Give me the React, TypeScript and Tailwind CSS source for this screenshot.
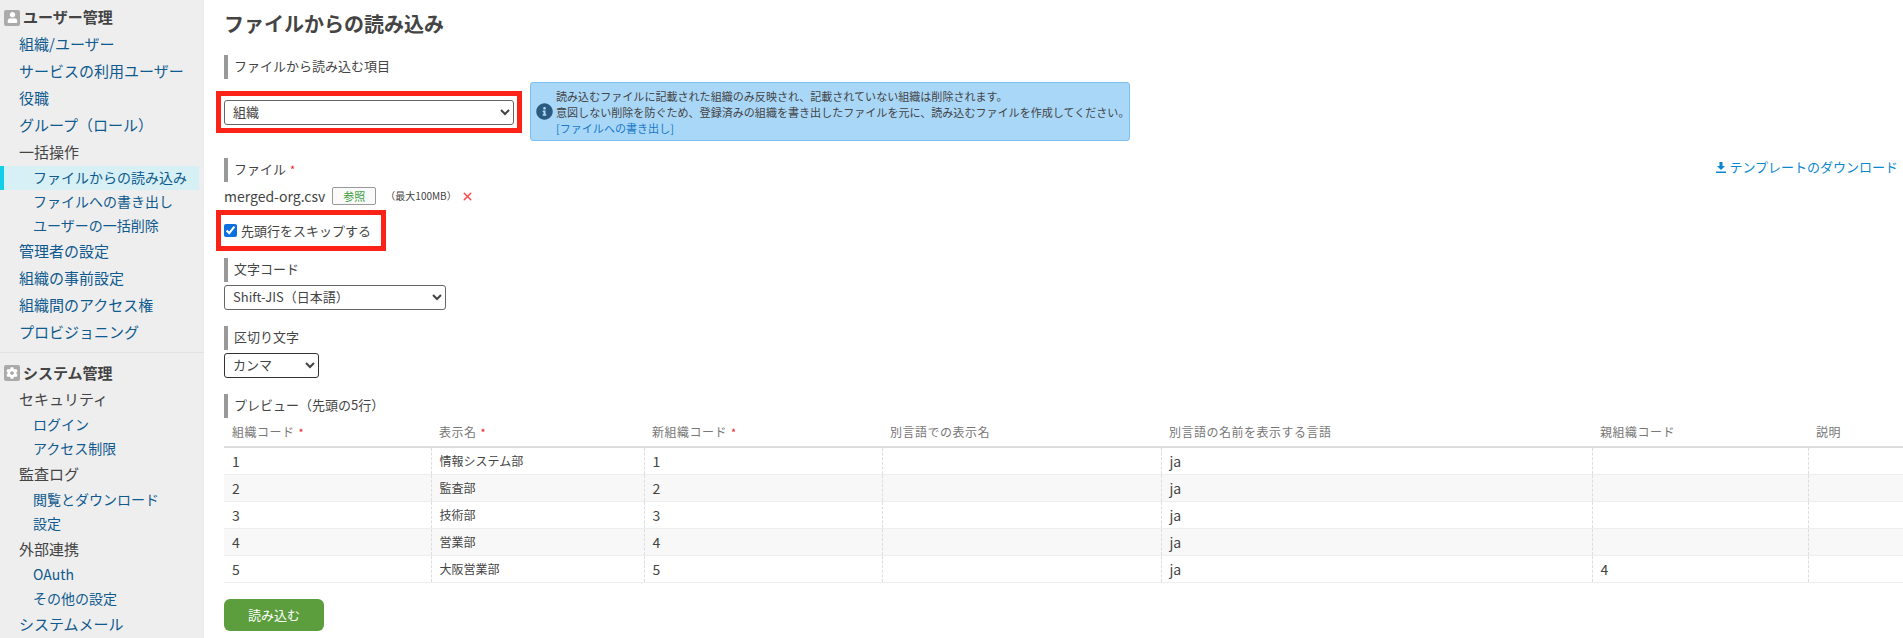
import React from 'react';
import { FaCog, FaInfoCircle, FaUser } from 'react-icons/fa';
import { X } from 'lucide-react';

const FONT = '[font-family:"Noto_Sans_CJK_JP","Noto_Sans",sans-serif]';

type NavItem = { label: string; level: 'top' | 'sub'; link?: boolean; active?: boolean };

const USER_NAV: NavItem[] = [
  { label: '組織/ユーザー', level: 'top', link: true },
  { label: 'サービスの利用ユーザー', level: 'top', link: true },
  { label: '役職', level: 'top', link: true },
  { label: 'グループ（ロール）', level: 'top', link: true },
  { label: '一括操作', level: 'top' },
  { label: 'ファイルからの読み込み', level: 'sub', link: true, active: true },
  { label: 'ファイルへの書き出し', level: 'sub', link: true },
  { label: 'ユーザーの一括削除', level: 'sub', link: true },
  { label: '管理者の設定', level: 'top', link: true },
  { label: '組織の事前設定', level: 'top', link: true },
  { label: '組織間のアクセス権', level: 'top', link: true },
  { label: 'プロビジョニング', level: 'top', link: true },
];

const SYSTEM_NAV: NavItem[] = [
  { label: 'セキュリティ', level: 'top' },
  { label: 'ログイン', level: 'sub', link: true },
  { label: 'アクセス制限', level: 'sub', link: true },
  { label: '監査ログ', level: 'top' },
  { label: '閲覧とダウンロード', level: 'sub', link: true },
  { label: '設定', level: 'sub', link: true },
  { label: '外部連携', level: 'top' },
  { label: 'OAuth', level: 'sub', link: true },
  { label: 'その他の設定', level: 'sub', link: true },
  { label: 'システムメール', level: 'top', link: true },
];

const COLUMNS = [
  { label: '組織コード', width: 'w-[207px]', required: true },
  { label: '表示名', width: 'w-[213px]', required: true },
  { label: '新組織コード', width: 'w-[238px]', required: true },
  { label: '別言語での表示名', width: 'w-[279px]' },
  { label: '別言語の名前を表示する言語', width: 'w-[431px]' },
  { label: '親組織コード', width: 'w-[216px]' },
  { label: '説明', width: 'w-[95px]' },
];

const ROWS = [
  ['1', '情報システム部', '1', '', 'ja', '', ''],
  ['2', '監査部', '2', '', 'ja', '', ''],
  ['3', '技術部', '3', '', 'ja', '', ''],
  ['4', '営業部', '4', '', 'ja', '', ''],
  ['5', '大阪営業部', '5', '', 'ja', '4', ''],
];

const NavRow = ({ item, raised }: { item: NavItem; raised?: boolean }) => {
  const color = item.link ? 'text-[#0f5a8e]' : 'text-[#444]';
  if (item.level === 'top') {
    return (
      <div className={`h-[27px] pl-[19px] text-[15px] ${raised ? 'leading-[25px]' : 'leading-[27px]'} ${color}`}>
        {item.label}
      </div>
    );
  }
  return (
    <div
      className={`h-6 mr-[5px] text-sm ${raised ? 'leading-[22px]' : 'leading-6'} ${color} ${
        item.active ? 'bg-[#d6f0f5] border-l-4 border-[#12cfe8] pl-[29px]' : 'pl-[33px]'
      }`}
    >
      {item.label}
    </div>
  );
};

const NavHeader = ({ icon, label, className = '' }: { icon: React.ReactNode; label: string; className?: string }) => (
  <div className={`flex items-center h-[27px] pl-1 gap-[3px] ${className}`}>
    <span className="flex items-center justify-center w-4 h-4 bg-[#aaa] rounded-[2px] text-white">{icon}</span>
    <span className="text-[15px] font-bold text-[#444]">{label}</span>
  </div>
);

const SectionLabel = ({ children, className = '' }: { children: React.ReactNode; className?: string }) => (
  <div className={`h-6 border-l-4 border-[#999] pl-[6px] text-[13px] leading-[22px] text-[#444] ${className}`}>
    {children}
  </div>
);

const Required = () => <span className="ml-1 text-[11px] text-[#e22]">*</span>;

export default function App() {
  return (
    <div className={`flex h-[638px] overflow-hidden bg-white ${FONT}`}>
      {/* Sidebar */}
      <aside className="w-[204px] shrink-0 bg-[#eee] pt-1">
        <NavHeader icon={<FaUser size={11} />} label="ユーザー管理" />
        {USER_NAV.map((item) => (
          <NavRow key={item.label} item={item} raised />
        ))}
        <div className="mt-[6px] mb-[5px] border-t border-[#e2e2e2]" />
        <NavHeader icon={<FaCog size={12} />} label="システム管理" className="pt-[3px]" />
        {SYSTEM_NAV.map((item) => (
          <NavRow key={item.label} item={item} />
        ))}
      </aside>

      {/* Main */}
      <main className="flex-1 min-w-0 overflow-hidden pl-5 pt-[10px]">
        <h1 className="text-xl font-bold leading-[28px] mb-[17px] text-[#444]">ファイルからの読み込み</h1>

        <SectionLabel>ファイルから読み込む項目</SectionLabel>
        <div className="flex items-start gap-2 mt-[3px] -ml-2">
          <div className="mt-[9px] w-[306px] h-[42px] border-[5px] border-[#fb2318] px-[3px] pt-[2px]">
            <select className="w-full h-[25px] border border-[#666] rounded-[3px] bg-white pl-1 pb-[2px] text-[13px] text-[#444]">
              <option>組織</option>
            </select>
          </div>
          <div className="flex items-center gap-[3px] w-[600px] h-[59px] pl-[5px] bg-[#a9d7f8] border border-[#7dbff0] rounded-[3px]">
            <FaInfoCircle size={17} className="text-[#2b5c80] shrink-0" />
            <div className="text-[11.05px] leading-[16.5px] whitespace-nowrap text-[#444]">
              <p>読み込むファイルに記載された組織のみ反映され、記載されていない組織は削除されます。</p>
              <p>意図しない削除を防ぐため、登録済みの組織を書き出したファイルを元に、読み込むファイルを作成してください。</p>
              <a className="text-[#1a78c8] leading-[15px] block">[ファイルへの書き出し]</a>
            </div>
          </div>
        </div>

        <div className="flex items-start justify-between mt-[17px] pr-[5px]">
          <SectionLabel>
            ファイル
            <Required />
          </SectionLabel>
          <a className="flex items-center gap-[3px] text-[13px] leading-[18px] text-[#0a87cf]">
            <svg width="10" height="11" viewBox="0 0 10 11" fill="currentColor">
              <path d="M3.5 0h3v4H9L5 8 1 4h2.5zM0 9.5h10V11H0z" />
            </svg>
            テンプレートのダウンロード
          </a>
        </div>

        <div className="flex items-center h-[18px] mt-[5px] text-sm text-[#444]">
          <span>merged-org.csv</span>
          <button className="ml-[7px] w-11 h-[18px] border border-[#999] rounded-[2px] bg-[#fafafa] text-[11px] leading-[16px] text-[#3f9f3f]">
            参照
          </button>
          <span className="ml-[9px] text-[10px]">（最大100MB）</span>
          <X size={13} strokeWidth={2.5} className="ml-1 text-[#f44]" />
        </div>

        <div className="flex items-center gap-[4px] w-[170px] h-[41px] mt-[5px] -ml-2 border-[5px] border-[#fb2318] pl-[3px]">
          <input type="checkbox" defaultChecked className="w-[13px] h-[13px] m-0 accent-[#0b6fe0]" />
          <span className="text-[13px] text-[#444]">先頭行をスキップする</span>
        </div>

        <SectionLabel className="mt-[7px]">文字コード</SectionLabel>
        <select className="block w-[222px] h-[25px] mt-[3px] border border-[#666] rounded-[3px] bg-white pl-1 pb-[2px] text-[13px] text-[#444]">
          <option>Shift-JIS（日本語）</option>
        </select>

        <SectionLabel className="mt-[16px]">区切り文字</SectionLabel>
        <select className="block w-[95px] h-[25px] mt-[3px] border border-[#333] rounded-[3px] bg-white pl-1 pb-[2px] text-[13px] text-[#444]">
          <option>カンマ</option>
        </select>

        <SectionLabel className="mt-[16px]">プレビュー（先頭の5行）</SectionLabel>
        <table className="table-fixed w-[1679px] border-collapse">
          <thead>
            <tr className="h-[29px] border-b-2 border-[#ddd]">
              {COLUMNS.map((col) => (
                <th key={col.label} className={`${col.width} px-2 text-left text-xs font-normal tracking-[0.5px] text-[#777]`}>
                  {col.label}
                  {col.required && <Required />}
                </th>
              ))}
            </tr>
          </thead>
          <tbody>
            {ROWS.map((row, i) => (
              <tr key={i} className={`h-[27px] border-b border-[#eee] ${i % 2 === 1 ? 'bg-[#f8f8f8]' : 'bg-white'}`}>
                {row.map((cell, j) => (
                  <td
                    key={j}
                    className={`px-2 text-[#444] ${j === 1 ? 'text-xs' : 'text-sm'} ${
                      j > 0 ? 'border-l border-dashed border-[#ddd]' : ''
                    }`}
                  >
                    {cell}
                  </td>
                ))}
              </tr>
            ))}
          </tbody>
        </table>

        <button className="w-[100px] h-8 mt-4 rounded-md bg-[#5c9e3e] text-[13px] text-white">読み込む</button>
      </main>
    </div>
  );
}
